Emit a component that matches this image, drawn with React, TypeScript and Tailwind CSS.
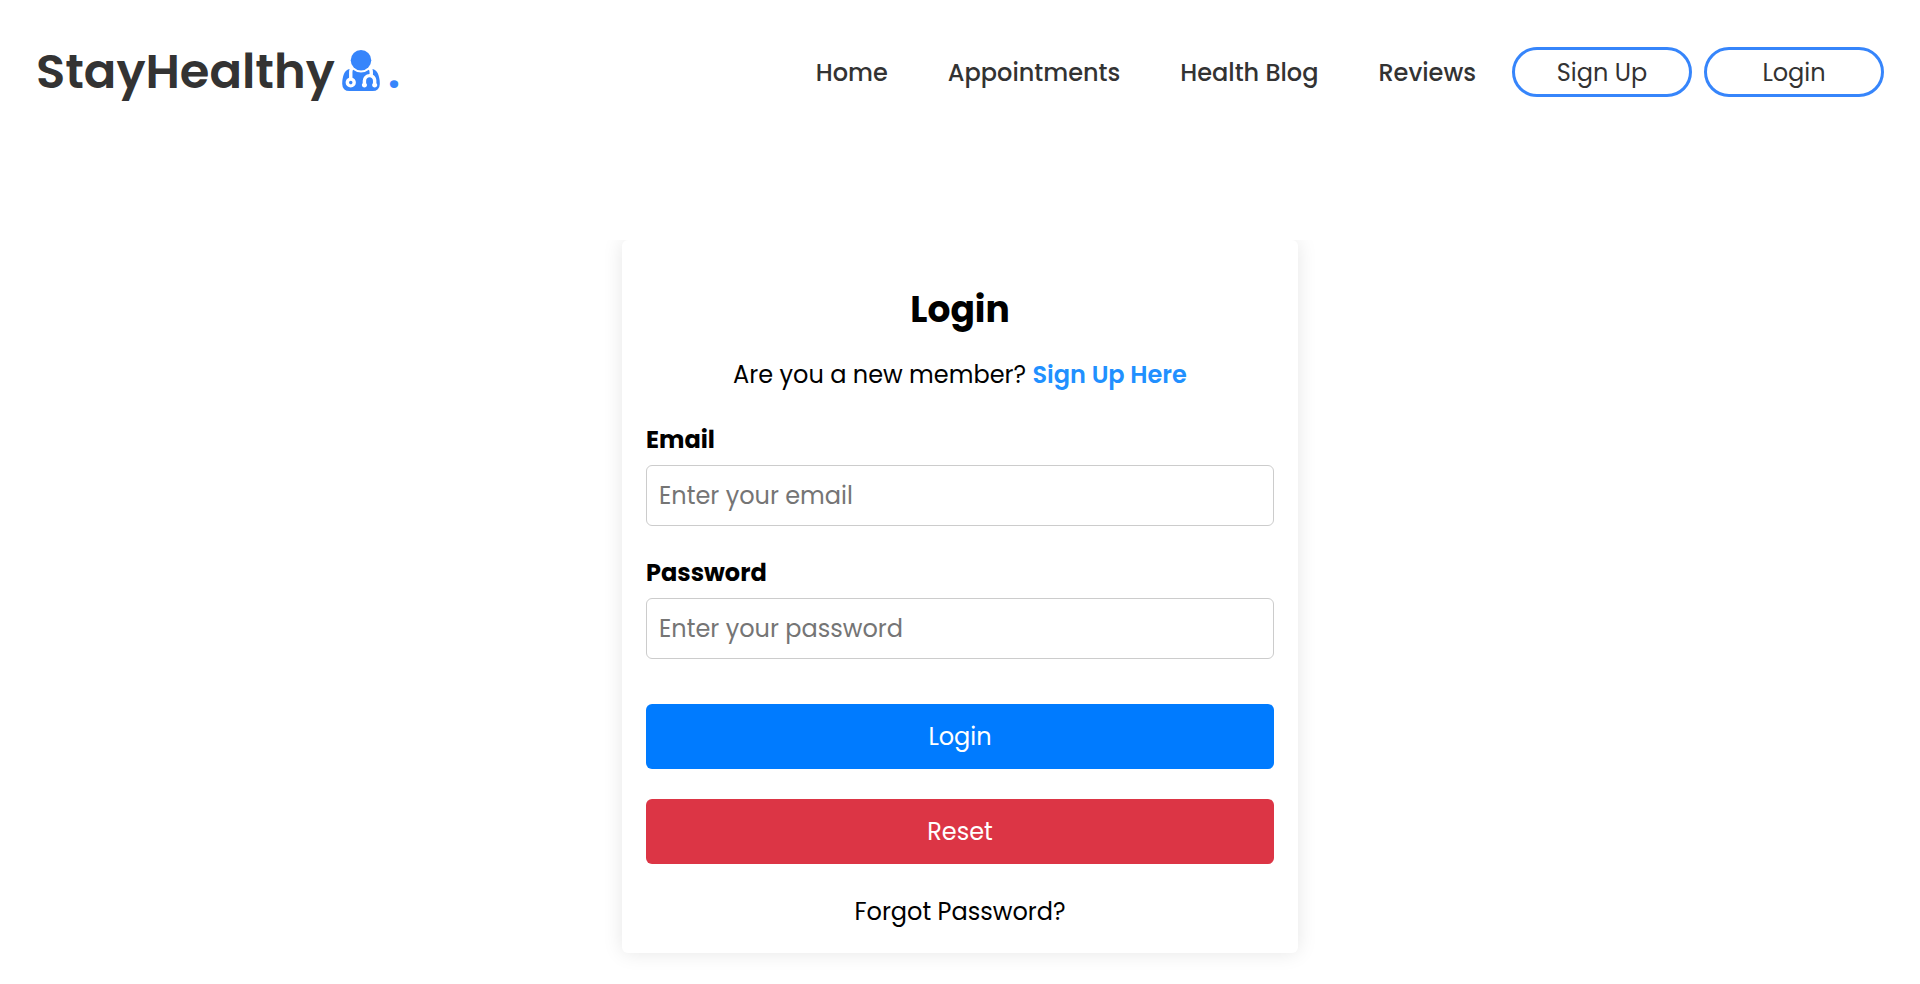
import { useState } from "react";

const navLinks = ["Home", "Appointments", "Health Blog", "Reviews"];

function DoctorIcon() {
  return (
    <svg viewBox="0 0 1408 1536" className="mb-1 ml-[7px] h-[41px] w-[38px] fill-[#3685fb]" aria-hidden="true">
      <g transform="translate(0 1408) scale(1 -1)">
        <path d="M384 192q0 -26 -19 -45t-45 -19t-45 19t-19 45t19 45t45 19t45 -19t19 -45z" />
        <path d="M1408 131q0 -121 -73 -190t-194 -69h-874q-121 0 -194 69t-73 190q0 68 5.500 131t24 138t47.500 132.500t81 103t120 60.500q-22 -52 -22 -120v-203q-58 -20 -93 -70t-35 -111q0 -80 56 -136t136 -56t136 56t56 136q0 61 -35.500 111t-92.500 70v203q0 62 25 93q132 -104 295 -104t295 104q25 -31 25 -93v-64q-106 0 -181 -75t-75 -181v-89q-32 -29 -32 -71q0 -40 28 -68t68 -28t68 28t28 68q0 42 -32 71v89q0 52 38 90t90 38t90 -38t38 -90v-89q-32 -29 -32 -71q0 -40 28 -68t68 -28t68 28t28 68q0 42 -32 71v89q0 68 -34.500 127.500t-93.500 93.500q0 10 0.500 42.500t0 48t-2.500 41.500t-7 47t-13 40q68 -15 120 -60.500t81 -103t47.500 -132.500t24 -138t5.500 -131z" />
        <path d="M1088 1024q0 -159 -112.500 -271.500t-271.500 -112.500t-271.500 112.500t-112.500 271.500t112.500 271.500t271.500 112.500t271.500 -112.500t112.500 -271.500z" />
      </g>
    </svg>
  );
}

function Header() {
  return (
    <header className="flex h-36 items-center justify-between px-9">
      <a href="#home" className="flex items-center text-5xl leading-[72px] font-semibold text-[#333]">
        StayHealthy
        <DoctorIcon />
        <span className="ml-2 text-[#3685fb]">.</span>
      </a>
      <nav className="flex items-center">
        <ul className="mr-9 flex gap-[60px] pt-0.5 text-2xl leading-9 font-medium text-[#333]">
          {navLinks.map((link) => (
            <li key={link}>
              <a href="#home">{link}</a>
            </li>
          ))}
        </ul>
        <div className="flex gap-3">
          {["Sign Up", "Login"].map((label) => (
            <button
              key={label}
              type="button"
              className="h-[50px] w-[180px] rounded-full border-3 border-[#3685fb] pt-0.5 text-2xl text-[#333]"
            >
              {label}
            </button>
          ))}
        </div>
      </nav>
    </header>
  );
}

type FieldProps = { id: string; label: string; type: string; placeholder: string };

function Field({ id, label, type, placeholder }: FieldProps) {
  const [value, setValue] = useState("");
  return (
    <div className="flex flex-col gap-[7px]">
      <label htmlFor={id} className="font-bold">
        {label}
      </label>
      <input
        id={id}
        type={type}
        value={value}
        onChange={(event) => setValue(event.target.value)}
        placeholder={placeholder}
        className="h-[61px] w-full rounded-md border border-[#ccc] px-3 placeholder:text-[#757575]"
      />
    </div>
  );
}

export default function App() {
  return (
    <div className="bg-white font-['Poppins','Inter',sans-serif] text-black">
      <Header />
      <main className="mt-24 flex justify-center overflow-hidden px-6 pb-[30px]">
        <section className="w-full max-w-[676px] rounded-md px-6 pt-[43px] pb-[23px] text-2xl leading-9 shadow-[0_0_20px_rgba(0,0,0,0.1)]">
          <h1 className="text-center text-4xl leading-[54px] font-bold">Login</h1>
          <p className="mt-5 text-center">
            Are you a new member?{" "}
            <a href="#signup" className="font-semibold text-[#2190ff]">
              Sign Up Here
            </a>
          </p>
          <form className="mt-[29px] flex flex-col" onSubmit={(event) => event.preventDefault()}>
            <div className="flex flex-col gap-[29px]">
              <Field id="email" label="Email" type="email" placeholder="Enter your email" />
              <Field id="password" label="Password" type="password" placeholder="Enter your password" />
            </div>
            <div className="mt-[45px] flex flex-col gap-[30px] text-white">
              <button type="submit" className="h-[65px] rounded-md bg-[#007bff]">
                Login
              </button>
              <button type="reset" className="h-[65px] rounded-md bg-[#dc3545]">
                Reset
              </button>
            </div>
          </form>
          <p className="mt-[30px] text-center">
            <a href="#forgot">Forgot Password?</a>
          </p>
        </section>
      </main>
    </div>
  );
}
